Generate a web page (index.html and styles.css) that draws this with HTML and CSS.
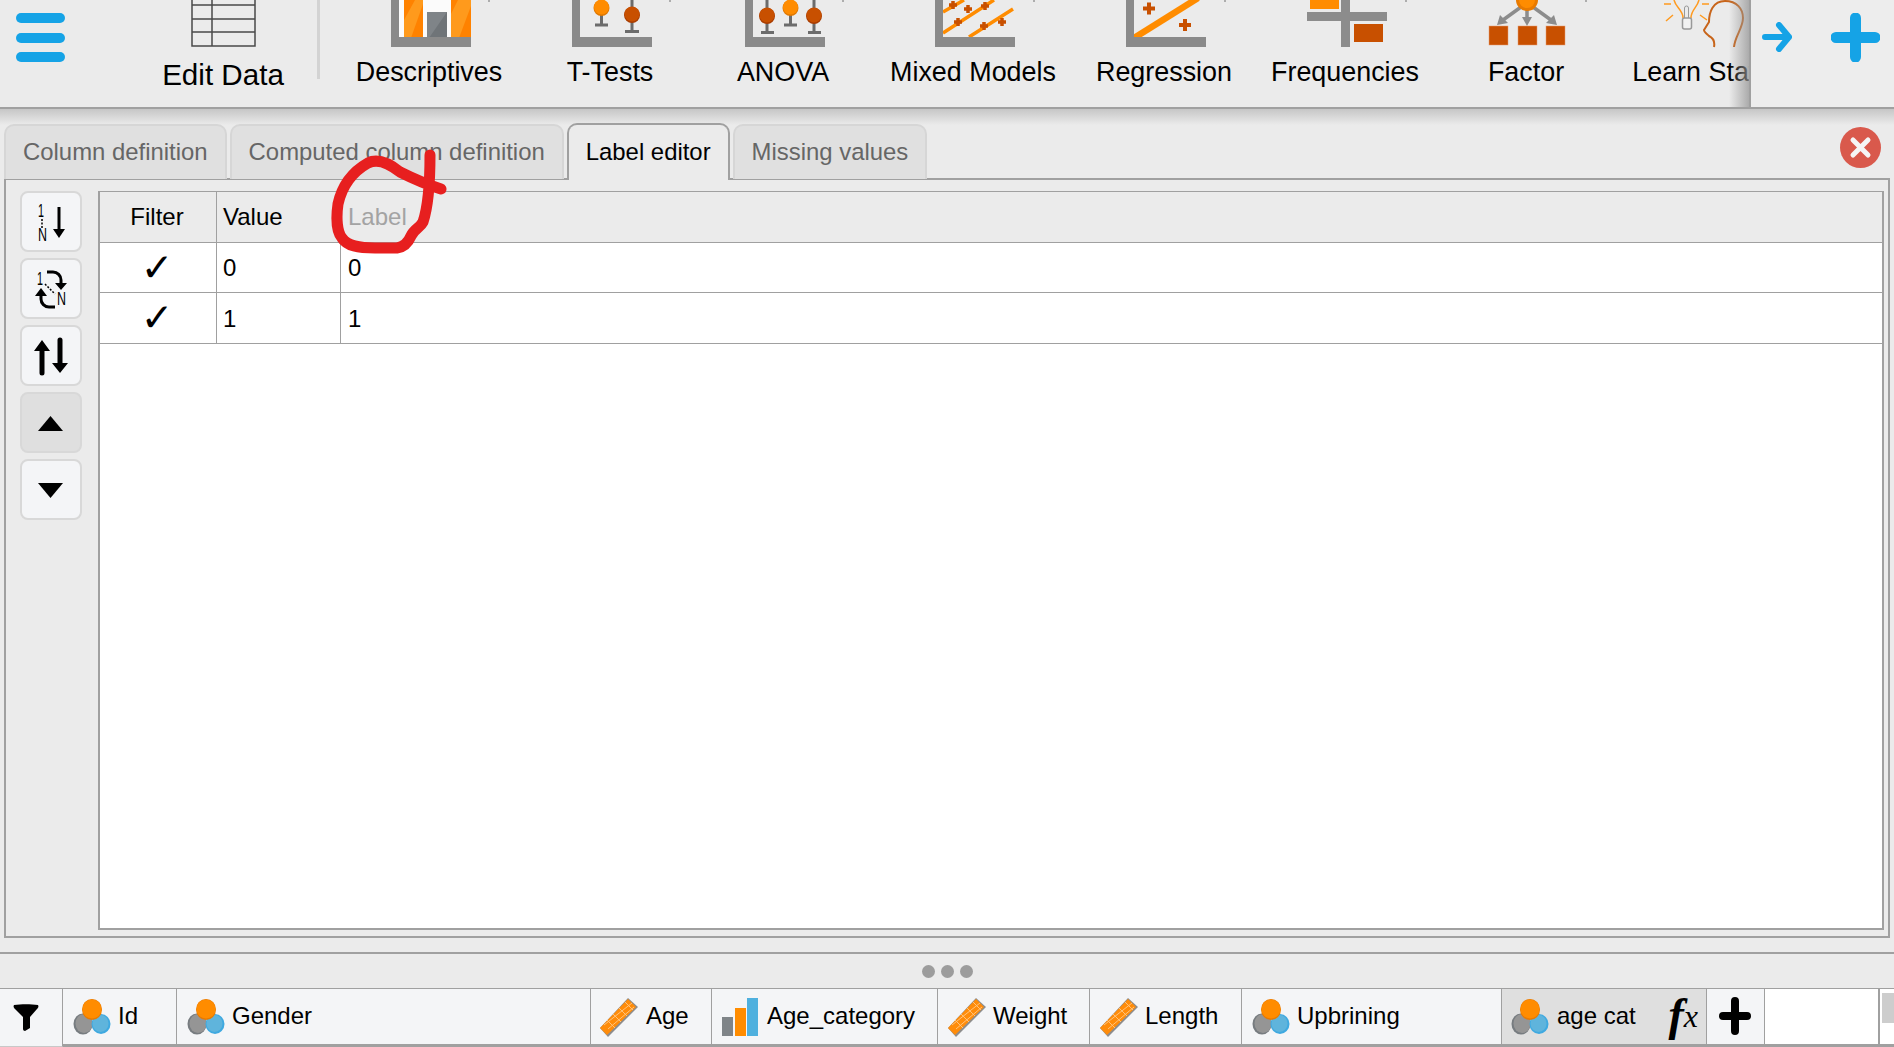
FILE: index.html
```html
<!DOCTYPE html>
<html lang="en">
<head>
<meta charset="utf-8">
<title>Label editor</title>
<link rel="stylesheet" href="styles.css">
</head>
<body>
<svg class="sprites" aria-hidden="true">
  <symbol id="nominal" viewBox="0 0 38 36">
    <ellipse cx="10" cy="25" rx="9.5" ry="10.5" fill="#777c80"/>
    <ellipse cx="11" cy="24.500" rx="8.500" ry="9.500" fill="#959595"/>
    <ellipse cx="28" cy="25" rx="9.5" ry="10" fill="#3fa9e0"/>
    <ellipse cx="27.500" cy="24.500" rx="8" ry="8.500" fill="#5fb4dc"/>
    <ellipse cx="19" cy="10.5" rx="10" ry="10.5" fill="#e87a00"/>
    <ellipse cx="19" cy="10" rx="9.500" ry="9.500" fill="#ff8c00"/>
  </symbol>
  <symbol id="ruler" viewBox="0 0 38 39">
    <polygon points="0,30 28,0 38,9 8,39" fill="#8d8d8d"/>
    <polygon points="0,30 28,1 36,9 7,37" fill="#ff8c0a"/>
    <path d="M7 22l8 8M13 16l8 8M19 10l8 8M25 4l8 8M4 27L32 5M8 31L34 9" stroke="#ffc27a" stroke-width="1" fill="none"/>
  </symbol>
</svg>

<header class="toolbar">
  <div class="ribbon">
    <svg class="hamburger" width="49" height="49" viewBox="0 0 49 49">
      <rect x="0" y="0" width="49" height="10" rx="5" fill="#15a3e6"/>
      <rect x="0" y="20" width="49" height="10" rx="5" fill="#15a3e6"/>
      <rect x="0" y="39" width="49" height="10" rx="5" fill="#15a3e6"/>
    </svg>
    <div class="rib-item rib-edit">
      <svg width="65" height="47" viewBox="0 0 65 47">
        <path d="M1 0V46H64V0M1 5H64M1 19H64M1 32H64M21 0V46" fill="none" stroke="#4a4a4a" stroke-width="1.5"/>
      </svg>
      <span class="rib-label rib-label-edit">Edit Data</span>
    </div>
    <div class="rib-sep"></div>
    <div class="rib-item rib-desc">
      <svg class="rib-icon" width="80" height="47" viewBox="0 0 80 47">
        <rect x="8" y="0" width="72" height="38" fill="#fbfbfb"/>
        <rect x="13" y="0" width="19" height="38" fill="#ff8200"/>
        <polygon points="13,38 13,20 24,0 32,0 32,4 20,38" fill="#ff9a1c"/>
        <rect x="60" y="0" width="20" height="38" fill="#ff8200"/>
        <polygon points="60,38 60,14 67,0 80,0 80,6 68,38" fill="#ff9a1c"/>
        <rect x="36" y="12" width="20" height="26" fill="#6f7478"/>
        <polygon points="36,12 56,12 38,38 36,38" fill="#7f8488"/>
        <path d="M0 0H8V37H80V47H0Z" fill="#8a8a8a"/>
        <path class="rib-tick" d="M98 0v2"/>
      </svg>
      <span class="rib-label">Descriptives</span>
    </div>
    <div class="rib-item rib-ttest">
      <svg class="rib-icon" width="80" height="47" viewBox="0 0 80 47">
        <path d="M29.500 14v11M23 25h13M60 0v31M53 31.500h14" stroke="#6c6c6c" stroke-width="3"/>
        <circle cx="29.500" cy="8" r="8" fill="#e07800"/>
        <circle cx="29.500" cy="7" r="7.500" fill="#ff8c00"/>
        <circle cx="60" cy="15" r="8" fill="#a83c00"/>
        <circle cx="60" cy="14" r="7.500" fill="#c85000"/>
        <path d="M0 0H8V37H80V47H0Z" fill="#8a8a8a"/>
        <path class="rib-tick" d="M98 0v2"/>
      </svg>
      <span class="rib-label">T-Tests</span>
    </div>
    <div class="rib-item rib-anova">
      <svg class="rib-icon" width="80" height="47" viewBox="0 0 80 47">
        <path d="M22 0v32M16 32.500h13M45.500 14v11M39 25h13M69 0v32M63 32.500h13" stroke="#6c6c6c" stroke-width="3"/>
        <circle cx="22" cy="16" r="8" fill="#a83c00"/>
        <circle cx="22" cy="15" r="7.500" fill="#c85000"/>
        <circle cx="45.500" cy="8" r="8" fill="#e07800"/>
        <circle cx="45.500" cy="7" r="7.500" fill="#ff8c00"/>
        <circle cx="69" cy="16" r="8" fill="#a83c00"/>
        <circle cx="69" cy="15" r="7.500" fill="#c85000"/>
        <path d="M0 0H8V37H80V47H0Z" fill="#8a8a8a"/>
        <path class="rib-tick" d="M98 0v2"/>
      </svg>
      <span class="rib-label">ANOVA</span>
    </div>
    <div class="rib-item rib-mixed">
      <svg class="rib-icon" width="80" height="47" viewBox="0 0 80 47">
        <path d="M8 12L29 0M8 33L59 0M34 37L78 9" stroke="#ff8c00" stroke-width="3.500" fill="none"/>
        <path d="M14 5h8M18 1v8M29 9h8M33 5v8M46 6h8M50 2v8M19 22h8M23 18v8M45 26h8M49 22v8M63 22h8M67 18v8" stroke="#c85000" stroke-width="3.500"/>
        <path d="M0 0H8V37H80V47H0Z" fill="#8a8a8a"/>
        <path class="rib-tick" d="M99 0v2"/>
      </svg>
      <span class="rib-label">Mixed Models</span>
    </div>
    <div class="rib-item rib-regr">
      <svg class="rib-icon" width="80" height="47" viewBox="0 0 80 47">
        <path d="M8 38L72 -2" stroke="#ff8c00" stroke-width="6.500" fill="none"/>
        <path d="M17 8.500h12M23 2.500v12M53 25h12M59 19v12" stroke="#c85000" stroke-width="4"/>
        <path d="M0 0H8V37H80V47H0Z" fill="#8a8a8a"/>
        <path class="rib-tick" d="M99 0v2"/>
      </svg>
      <span class="rib-label">Regression</span>
    </div>
    <div class="rib-item rib-freq">
      <svg class="rib-icon" width="80" height="47" viewBox="0 0 80 47">
        <rect x="3" y="0" width="29" height="9" fill="#ff8c00"/>
        <rect x="47" y="24" width="29" height="18" fill="#c85000"/>
        <rect x="0" y="12" width="80" height="9" fill="#8c8c8c"/>
        <rect x="34" y="0" width="9" height="47" fill="#8c8c8c"/>
        <path class="rib-tick" d="M99 0v2"/>
      </svg>
      <span class="rib-label">Frequencies</span>
    </div>
    <div class="rib-item rib-factor">
      <svg class="rib-icon" width="80" height="47" viewBox="0 0 80 47">
        <path d="M33 7L15 20M39 7V20M45 7L63 20" stroke="#8c8c8c" stroke-width="3.500" fill="none"/>
        <path d="M9 25l3-10 8 8zM34 17h10l-5 9zM69 25l-3-10-8 8z" fill="#8c8c8c"/>
        <circle cx="39" cy="0" r="11" fill="#e87a00"/>
        <circle cx="39" cy="0" r="8" fill="#ff8c00"/>
        <rect x="1" y="26" width="19" height="19" fill="#c85000" stroke="#e89a70" stroke-width=".5"/>
        <rect x="30" y="26" width="19" height="19" fill="#c85000" stroke="#e89a70" stroke-width=".5"/>
        <rect x="58" y="26" width="19" height="19" fill="#c85000" stroke="#e89a70" stroke-width=".5"/>
        <path class="rib-tick" d="M98 0v2"/>
      </svg>
      <span class="rib-label">Factor</span>
    </div>
    <div class="rib-item rib-learn">
      <svg class="rib-icon" width="80" height="47" viewBox="0 0 80 47">
        <path d="M11 0C13 8 20 10 20 18M36 0C34 8 28 10 28 18" fill="none" stroke="#ff9a1f" stroke-width="1.500"/>
        <path d="M21.500 18V8a2 2 0 0 1 4 0V18" fill="none" stroke="#999" stroke-width="1"/>
        <rect x="19.500" y="18" width="9" height="11" rx="2" fill="#f2f2f2" stroke="#999" stroke-width="1.500"/>
        <path d="M1 4H8M39 4H46M3 21L10 15M37 15L44 20" stroke="#ff9a1f" stroke-width="1.500"/>
        <path d="M51 47C52 42 50 38 46 36C44 34 41 32 41 30L46 22C46 12 50 1 62 1C74 1 80 9 80 18C80 28 72 36 71 47" fill="none" stroke="#c8651b" stroke-width="2"/>
      </svg>
      <span class="rib-label">Learn Stats</span>
    </div>
  </div>
  <div class="tool-end">
    <svg width="30" height="30" viewBox="0 0 30 30">
      <path d="M3 15H27M17 3L27 15L17 27" fill="none" stroke="#15a3e6" stroke-width="6" stroke-linecap="round" stroke-linejoin="round"/>
    </svg>
    <svg class="tool-plus" width="49" height="49" viewBox="0 0 49 49">
      <path d="M5 24.500H44M24.500 5V44" stroke="#15a3e6" stroke-width="11" stroke-linecap="round"/>
    </svg>
  </div>
</header>

<main class="main">
  <div class="tabrow">
    <div class="tab">Column definition</div>
    <div class="tab">Computed column definition</div>
    <div class="tab tab-active">Label editor</div>
    <div class="tab">Missing values</div>
    <svg class="close" width="41" height="41" viewBox="0 0 41 41">
      <circle cx="20.500" cy="20.500" r="20.500" fill="#d9594c"/>
      <path d="M13 13L28 28M28 13L13 28" stroke="#f5f5f5" stroke-width="5" stroke-linecap="round"/>
    </svg>
  </div>
  <section class="panel">
    <div class="side">
      <button class="sidebtn" type="button">
        <svg width="58" height="57" viewBox="2 2 58 57">
          <text class="mini" x="18" y="25" textLength="6" lengthAdjust="spacingAndGlyphs">1</text>
          <text class="mini" x="18" y="49" textLength="9" lengthAdjust="spacingAndGlyphs">N</text>
          <path d="M22 27V37" stroke="#000" stroke-width="1.500" stroke-dasharray="2 1.500"/>
          <path d="M39 15V40" stroke="#000" stroke-width="3"/>
          <path d="M33 37H45L39 46Z"/>
        </svg>
      </button>
      <button class="sidebtn" type="button">
        <svg width="58" height="57" viewBox="2 2 58 57">
          <text class="mini" x="17" y="26" textLength="6" lengthAdjust="spacingAndGlyphs">1</text>
          <text class="mini" x="37" y="46" textLength="9" lengthAdjust="spacingAndGlyphs">N</text>
          <path d="M25 25L35 35" stroke="#000" stroke-width="1.500" stroke-dasharray="2 1.500"/>
          <path d="M27 13h6a8 8 0 0 1 8 8v4M35 48h-6a8 8 0 0 1 -8 -8v-4" fill="none" stroke="#000" stroke-width="3"/>
          <path d="M35 24H47L41 31ZM15 37H27L21 29Z"/>
        </svg>
      </button>
      <button class="sidebtn" type="button">
        <svg width="58" height="57" viewBox="2 2 58 57">
          <path d="M22 20V47M40 14V40" stroke="#000" stroke-width="5" stroke-linecap="round"/>
          <path d="M14 25L22 14L30 25ZM32 37L40 47L48 37Z"/>
        </svg>
      </button>
      <button class="sidebtn sidebtn-on" type="button">
        <svg width="58" height="57" viewBox="2 2 58 57">
          <path d="M18 38H43L30.500 23Z"/>
        </svg>
      </button>
      <button class="sidebtn" type="button">
        <svg width="58" height="57" viewBox="2 2 58 57">
          <path d="M18 23H43L30.500 38Z"/>
        </svg>
      </button>
    </div>
    <div class="grid">
      <div class="cell head center">Filter</div>
      <div class="cell head">Value</div>
      <div class="cell head head-last muted">Label</div>
      <div class="cell center check">✓</div>
      <div class="cell body-cell">0</div>
      <div class="cell body-cell cell-last">0</div>
      <div class="cell center check">✓</div>
      <div class="cell body-cell">1</div>
      <div class="cell body-cell cell-last">1</div>
    </div>
  </section>
  <svg class="scribble" width="130" height="110" viewBox="330 148 130 110">
    <path d="M441 189C425 184 412 178 400 172C390 164 378 158 368 163C352 172 342 186 338 204C336 218 337 232 342 238C347 246 358 248 375 248H397C404 247 408 243 411 236C414 229 420 228 423 222C427 210 430 190 430 155" fill="none" stroke="#e71f1f" stroke-width="11" stroke-linecap="round" stroke-linejoin="round"/>
  </svg>
</main>

<div class="dock">
  <span class="dot"></span><span class="dot"></span><span class="dot"></span>
</div>

<footer class="vars">
  <div class="var var-filter">
    <svg width="26" height="27" viewBox="0 0 26 27"><path d="M1 1C8 0 18 0 25 1C26 3 25 4 24 5L17 13V24L12 27C11 27 10 26 10 25V13L2 5C1 4 0 3 1 1Z"/></svg>
  </div>
  <div class="var w-id"><svg class="vi" width="38" height="36"><use href="#nominal"/></svg><span>Id</span></div>
  <div class="var w-gender"><svg class="vi" width="38" height="36"><use href="#nominal"/></svg><span>Gender</span></div>
  <div class="var w-age var-tight"><svg class="vi" width="38" height="39"><use href="#ruler"/></svg><span>Age</span></div>
  <div class="var w-agecat">
    <svg class="vi" width="36" height="38" viewBox="0 0 36 38">
      <rect x="0" y="19" width="11" height="19" fill="#7f8488"/>
      <rect x="13" y="10" width="11" height="28" fill="#ff8c00"/>
      <rect x="25" y="0" width="11" height="38" fill="#4fb0de"/>
    </svg><span>Age_category</span>
  </div>
  <div class="var w-weight"><svg class="vi" width="38" height="39"><use href="#ruler"/></svg><span>Weight</span></div>
  <div class="var w-length"><svg class="vi" width="38" height="39"><use href="#ruler"/></svg><span>Length</span></div>
  <div class="var w-upbr"><svg class="vi" width="38" height="36"><use href="#nominal"/></svg><span>Upbrining</span></div>
  <div class="var w-cat var-on"><svg class="vi" width="38" height="36"><use href="#nominal"/></svg><span>age cat</span><i class="fx"><b class="fx-f">f</b>x</i></div>
  <div class="var w-plus">
    <svg width="32" height="38" viewBox="0 0 32 38"><path d="M4 19H28M16 4V34" stroke="#000" stroke-width="8" stroke-linecap="round"/></svg>
  </div>
  <div class="vars-blank"></div>
  <div class="vars-scroll"><div class="thumb"></div></div>
</footer>
</body>
</html>
```

FILE: styles.css
```css
* { box-sizing: border-box; }
html, body { margin: 0; padding: 0; }
body {
  width: 1894px;
  height: 1047px;
  overflow: hidden;
  display: flex;
  flex-direction: column;
  background: #ebebeb;
  color: #000;
  font-family: "Liberation Sans", Arial, sans-serif;
}
.sprites { position: absolute; width: 0; height: 0; }

/* toolbar */
.toolbar {
  flex: 0 0 109px;
  display: flex;
  background: #ebebeb;
  border-bottom: 2px solid #a0a0a0;
}
.ribbon {
  position: relative;
  flex: 0 0 1749px;
  display: flex;
  align-items: flex-start;
  padding-left: 16px;
  overflow: hidden;
}
.ribbon::after {
  content: "";
  position: absolute;
  top: 0;
  right: 0;
  bottom: 0;
  width: 20px;
  background: linear-gradient(to right, rgba(150,150,150,0), rgba(150,150,150,.75));
}
.hamburger { flex: none; margin-top: 13px; }
.rib-item {
  flex: none;
  display: flex;
  flex-direction: column;
  align-items: center;
  white-space: nowrap;
}
.rib-item > svg { display: block; }
.rib-icon { overflow: visible; margin-left: 3px; }
.rib-tick { stroke: #999; stroke-width: 1.5; fill: none; }
.rib-label { font-size: 26.9px; line-height: 30px; margin-top: 10px; }
.rib-label-edit { font-size: 29.6px; margin-top: 13px; }
.rib-edit { width: 170px; margin-left: 73px; }
.rib-sep {
  flex: none;
  width: 3px;
  height: 79px;
  margin-left: 9px;
  margin-right: 20px;
  background: #d3d3d3;
}
.rib-desc { width: 178px; }
.rib-ttest { width: 184px; }
.rib-anova { width: 162px; }
.rib-mixed { width: 218px; }
.rib-regr { width: 164px; }
.rib-freq { width: 198px; }
.rib-factor { width: 164px; }
.rib-learn { width: 186px; }
.tool-end {
  flex: 1;
  display: flex;
  align-items: flex-start;
  padding: 22px 0 0 11px;
  border-left: 2px solid #a0a0a0;
  background: #ededed;
}
.tool-plus { margin-left: 39px; margin-top: -9px; }

/* main */
.main {
  position: relative;
  flex: 1;
  min-height: 0;
  display: flex;
  flex-direction: column;
  background: linear-gradient(to bottom, #c6c6c6, #ebebeb) top / 100% 16px no-repeat, #ebebeb;
  padding: 14px 4px 14px;
}
.tabrow {
  flex: none;
  display: flex;
  align-items: flex-end;
  gap: 3px;
  height: 56px;
  position: relative;
  z-index: 1;
  margin-bottom: -1px;
}
.tab {
  height: 55px;
  padding: 0 17px 2px;
  display: flex;
  align-items: center;
  font-size: 23.9px;
  color: #666;
  background: #e0e0e0;
  border: 2px solid #d6d6d6;
  border-bottom: 0;
  border-radius: 10px 10px 0 0;
}
.tab-active {
  height: 57px;
  margin-bottom: -1px;
  color: #000;
  background: #ebebeb;
  border-color: #a0a0a0;
}
.close { margin-left: auto; margin-right: 9px; align-self: flex-start; margin-top: 4px; flex: none; }
.panel {
  flex: 1;
  min-height: 0;
  display: flex;
  gap: 16px;
  padding: 11px 4px 6px 14px;
  border: 2px solid #a0a0a0;
  background: #ebebeb;
}
.side { flex: none; width: 62px; display: flex; flex-direction: column; gap: 6px; }
.sidebtn {
  display: block;
  width: 62px;
  height: 61px;
  padding: 1px 0 0;
  background: #f4f5f7;
  border: 2px solid #d8d8d8;
  border-radius: 8px;
}
.sidebtn svg { display: block; }
.sidebtn-on { background: #dfdfdf; }
.mini { font-family: "Liberation Sans", Arial, sans-serif; font-size: 18px; }

/* table */
.grid {
  flex: 1;
  display: grid;
  grid-template-columns: 117px 124px 1fr;
  grid-auto-rows: 50.5px;
  align-content: start;
  background: #fff;
  border: 2px solid #a0a0a0;
  border-top-width: 1.5px;
  font-size: 24px;
}
.cell {
  display: flex;
  align-items: center;
  padding-left: 6px;
  border-right: 1.5px solid #a0a0a0;
  border-bottom: 1.5px solid #a0a0a0;
  line-height: 1;
}
.body-cell { padding-top: 2px; }
.cell-last, .head-last { border-right: 0; padding-left: 7px; }
.head { background: #ebebeb; }
.center { justify-content: center; padding-left: 0; padding-right: 2px; }
.muted { color: #a3a3a3; }
.check { font-family: "DejaVu Sans", sans-serif; font-size: 39px; font-weight: bold; }

/* scribble annotation */
.scribble { position: absolute; left: 330px; top: 39px; z-index: 2; pointer-events: none; }

/* dock */
.dock {
  flex: 0 0 36px;
  display: flex;
  align-items: center;
  justify-content: center;
  gap: 6px;
  border-top: 2px solid #a0a0a0;
  background: #ebebeb;
}
.dot { width: 13px; height: 13px; border-radius: 50%; background: #9c9c9c; }

/* variables */
.vars {
  flex: 0 0 59px;
  display: flex;
  font-size: 24px;
  background: #fff;
  border-top: 1.5px solid #a0a0a0;
}
.var {
  flex: none;
  display: flex;
  align-items: center;
  gap: 7px;
  height: 57.5px;
  padding: 0 0 0 10px;
  background: #f4f5f7;
  border-right: 1.5px solid #a0a0a0;
  border-bottom: 3px solid #a0a0a0;
  white-space: nowrap;
}
.var > span { line-height: 1; margin-top: 0; }
.vi { flex: none; display: block; margin-top: 2px; }
.var-filter { width: 63px; padding-left: 13px; border-bottom: 1px solid #c8c8c8; }
.var-tight { padding-left: 9px; gap: 8px; }
.w-id { width: 114px; }
.w-gender { width: 414px; }
.w-age { width: 121px; }
.w-agecat { width: 226px; gap: 9px; }
.w-weight { width: 152px; }
.w-length { width: 152px; }
.w-upbr { width: 260px; }
.w-cat { width: 205px; background: #dfdfdf; padding-left: 9px; gap: 8px; }
.w-plus { width: 58px; padding-left: 12px; }
.fx {
  margin-left: auto;
  margin-right: 8px;
  font-family: "Liberation Serif", serif;
  font-style: italic;
  font-size: 32px;
  line-height: 1;
  margin-top: -2px;
}
.fx-f { font-size: 46px; font-weight: bold; vertical-align: -3px; }
.vars-blank {
  flex: 1;
  height: 57.5px;
  background: #fff;
  border-bottom: 3px solid #a0a0a0;
}
.vars-scroll {
  flex: none;
  width: 16px;
  height: 57.5px;
  padding: 4px 0 0 2px;
  background: #fff;
  border-left: 2px solid #a0a0a0;
  border-bottom: 3px solid #a0a0a0;
}
.thumb { height: 30px; background: #cdcdcd; }
```
